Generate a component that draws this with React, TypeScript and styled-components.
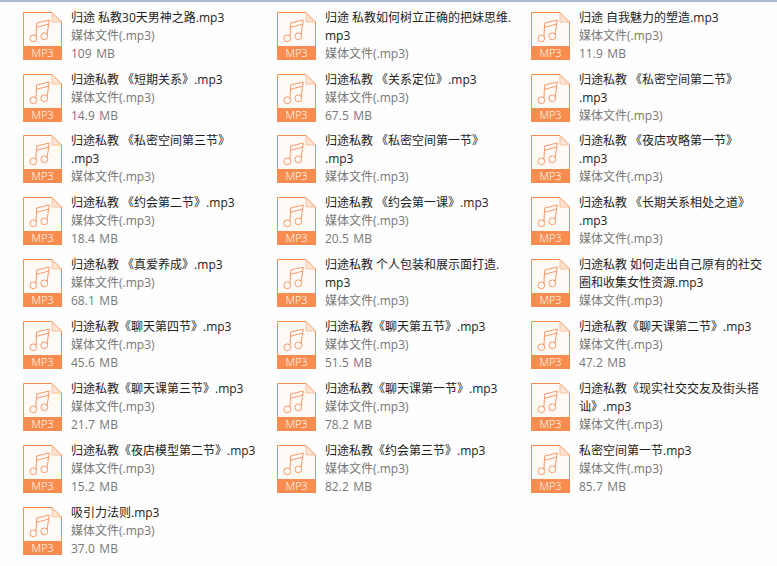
import styled, { createGlobalStyle } from "styled-components";

const GlobalStyle = createGlobalStyle`
  html, body {
    margin: 0;
    padding: 0;
    background: #fefefe;
  }
`;

const Page = styled.div`
  width: 777px;
  height: 566px;
  box-sizing: border-box;
  overflow: hidden;
  border-top: 2px solid #a9b9d2;
  padding: 10px 0 0 23px;
  background: #fefefe;
  font-family: "Open Sans", "Noto Sans CJK SC", sans-serif;
  font-size: 12px;
`;

const Grid = styled.div`
  display: grid;
  grid-template-columns: repeat(3, 254px);
  grid-template-rows: 62px 61px repeat(7, 62px);
`;

const Item = styled.div`
  display: flex;
  align-items: flex-start;
  gap: 9px;
`;

const Info = styled.div`
  display: flex;
  flex-direction: column;
  margin-top: -3px;
`;

const Title = styled.div`
  line-height: 18px;
  height: 18px;
  color: #1c1c1c;
  white-space: nowrap;
`;

const Meta = styled.div`
  line-height: 18px;
  height: 18px;
  color: #777;
  white-space: nowrap;
`;

const Size = styled(Meta)`
  word-spacing: 1.5px;
`;

const Icon = styled.svg`
  display: block;
  flex: none;
`;

const IconLabel = styled.text`
  font-family: "Open Sans", sans-serif;
  font-size: 11px;
  font-weight: 300;
  fill: #fff;
`;

const Mp3Icon = () => (
  <Icon width="39" height="48" viewBox="0 0 39 48">
    <path d="M.5.5H29L38.5 10V47.5H.5Z" fill="#fffaf6" stroke="#f98d4f" />
    <path d="M29 1V10H38Z" fill="#fde3d2" stroke="#fbc3a2" />
    <rect x="0" y="34" width="39" height="14" fill="#f98d4f" />
    <IconLabel x="19.5" y="44.5" textAnchor="middle">MP3</IconLabel>
    <g fill="none" stroke="#f9986a" strokeWidth="1">
      <circle cx="10.3" cy="26.3" r="3.4" />
      <circle cx="21.3" cy="24.3" r="3.4" />
      <path d="M12.9 24.5 13.7 11 26.3 8 24 23" />
      <path d="M13.6 15.3 26 12" />
    </g>
  </Icon>
);

const MEDIA = "媒体文件(.mp3)";

const files: { title: string[]; size?: string }[] = [
  { title: ["归途 私教30天男神之路.mp3"], size: "109 MB" },
  { title: ["归途 私教如何树立正确的把妹思维.", "mp3"] },
  { title: ["归途 自我魅力的塑造.mp3"], size: "11.9 MB" },
  { title: ["归途私教 《短期关系》.mp3"], size: "14.9 MB" },
  { title: ["归途私教 《关系定位》.mp3"], size: "67.5 MB" },
  { title: ["归途私教 《私密空间第二节》", ".mp3"] },
  { title: ["归途私教 《私密空间第三节》", ".mp3"] },
  { title: ["归途私教 《私密空间第一节》", ".mp3"] },
  { title: ["归途私教 《夜店攻略第一节》", ".mp3"] },
  { title: ["归途私教 《约会第二节》.mp3"], size: "18.4 MB" },
  { title: ["归途私教 《约会第一课》.mp3"], size: "20.5 MB" },
  { title: ["归途私教 《长期关系相处之道》", ".mp3"] },
  { title: ["归途私教 《真爱养成》.mp3"], size: "68.1 MB" },
  { title: ["归途私教 个人包装和展示面打造.", "mp3"] },
  { title: ["归途私教 如何走出自己原有的社交", "圈和收集女性资源.mp3"] },
  { title: ["归途私教《聊天第四节》.mp3"], size: "45.6 MB" },
  { title: ["归途私教《聊天第五节》.mp3"], size: "51.5 MB" },
  { title: ["归途私教《聊天课第二节》.mp3"], size: "47.2 MB" },
  { title: ["归途私教《聊天课第三节》.mp3"], size: "21.7 MB" },
  { title: ["归途私教《聊天课第一节》.mp3"], size: "78.2 MB" },
  { title: ["归途私教《现实社交交友及街头搭", "讪》.mp3"] },
  { title: ["归途私教《夜店模型第二节》.mp3"], size: "15.2 MB" },
  { title: ["归途私教《约会第三节》.mp3"], size: "82.2 MB" },
  { title: ["私密空间第一节.mp3"], size: "85.7 MB" },
  { title: ["吸引力法则.mp3"], size: "37.0 MB" },
];

const App = () => (
  <Page>
    <GlobalStyle />
    <Grid>
      {files.map((file) => (
        <Item key={file.title.join("")}>
          <Mp3Icon />
          <Info>
            {file.title.map((line) => (
              <Title key={line}>{line}</Title>
            ))}
            <Meta>{MEDIA}</Meta>
            {file.size && <Size>{file.size}</Size>}
          </Info>
        </Item>
      ))}
    </Grid>
  </Page>
);

export default App;
